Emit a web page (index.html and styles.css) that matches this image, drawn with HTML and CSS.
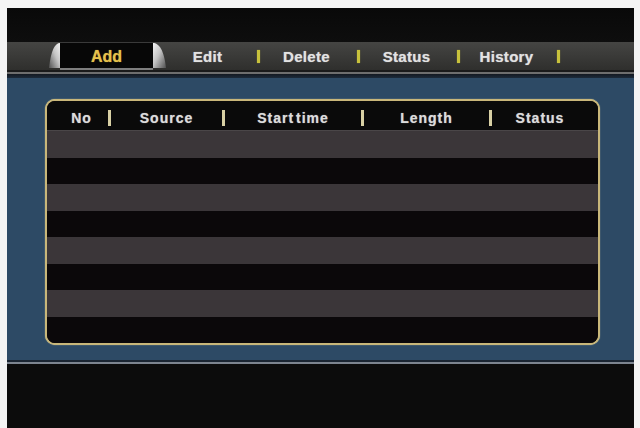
FILE: index.html
```html
<!DOCTYPE html>
<html>
<head>
<meta charset="utf-8">
<link rel="stylesheet" href="styles.css">
</head>
<body>
<div class="screen">
  <div class="top"></div>
  <div class="tabbar">
    <div class="tab-active">
      <svg class="wing" width="13" height="28" viewBox="0 0 13 28">
        <defs>
          <linearGradient id="wl" x1="1" y1="0" x2="0" y2="1">
            <stop offset="0" stop-color="#f4f4f4"/>
            <stop offset="0.45" stop-color="#c4c4c4"/>
            <stop offset="1" stop-color="#505050"/>
          </linearGradient>
        </defs>
        <path d="M13 1 C 8 1, 4 8, 2 26 L13 26 Z" fill="url(#wl)"/>
      </svg>
      <span class="pill">Add</span>
      <svg class="wing" width="15" height="28" viewBox="0 0 15 28">
        <defs>
          <linearGradient id="wr" x1="0" y1="0" x2="1" y2="1">
            <stop offset="0" stop-color="#f4f4f4"/>
            <stop offset="0.45" stop-color="#c4c4c4"/>
            <stop offset="1" stop-color="#505050"/>
          </linearGradient>
        </defs>
        <path d="M0 1 C 6 1, 11 8, 13 26 L0 26 Z" fill="url(#wr)"/>
      </svg>
    </div>
    <span class="tab tab-first">Edit</span><i class="sep"></i>
    <span class="tab">Delete</span><i class="sep"></i>
    <span class="tab">Status</span><i class="sep"></i>
    <span class="tab">History</span><i class="sep"></i>
  </div>
  <div class="rule"></div>
  <div class="panel">
    <div class="box">
      <div class="thead">
        <span class="th th-first">No</span><i class="hsep"></i>
        <span class="th">Source</span><i class="hsep"></i>
        <span class="th th-time">Start time</span><i class="hsep"></i>
        <span class="th">Length</span><i class="hsep"></i>
        <span class="th th-last">Status</span>
      </div>
      <div class="row grey"></div>
      <div class="row dark"></div>
      <div class="row grey"></div>
      <div class="row dark"></div>
      <div class="row grey"></div>
      <div class="row dark"></div>
      <div class="row grey"></div>
      <div class="row dark"></div>
    </div>
  </div>
  <div class="bottom-rule"></div>
  <div class="footer"></div>
</div>
</body>
</html>
```

FILE: styles.css
```css
html, body {
  margin: 0;
  padding: 0;
  background: #f4f4f4;
}

.screen {
  margin: 8px 0 0 7px;
  width: 627px;
  height: 420px;
  background: #0b0b0b;
  display: flex;
  flex-direction: column;
  font-family: "Liberation Sans", Arial, sans-serif;
  font-weight: bold;
  overflow: hidden;
}

.top {
  height: 34px;
  background: linear-gradient(#090909, #0e0e0e);
}

.tabbar {
  height: 28px;
  display: flex;
  align-items: center;
  padding-left: 40px;
  background: linear-gradient(#454543, #3a3a38 50%, #2f2f2d);
}

.tab-active {
  display: flex;
  align-items: stretch;
  height: 28px;
}

.wing {
  display: block;
}

.pill {
  width: 93px;
  box-sizing: border-box;
  background: #070707;
  border-top: 1px solid #3a3a3a;
  border-bottom: 2px solid #7e7e7e;
  color: #e6c24c;
  font-size: 16px;
  display: flex;
  align-items: center;
  justify-content: center;
  padding-top: 2px;
  text-shadow: 0 0 1px rgba(230, 194, 76, 0.7);
}

.tab {
  width: 97px;
  box-sizing: border-box;
  padding-right: 4px;
  text-align: center;
  color: #e2e2e2;
  font-size: 15px;
  letter-spacing: 0.3px;
  text-shadow: 0 0 1px rgba(255, 255, 255, 0.6);
}

.tab-first {
  width: 89px;
  padding-right: 10px;
}

.sep {
  display: block;
  width: 3px;
  height: 13px;
  background: #c8c23c;
  box-shadow: 0 0 1px #c8c23c;
}

.rule {
  height: 8px;
  background: linear-gradient(#1a1a1a 0, #1a1a1a 2px, #6e6e6e 2px, #6e6e6e 4px, #131820 4px, #1c2a3a 8px);
}

.panel {
  height: 282px;
  box-sizing: border-box;
  padding: 21px 0 0 38px;
  background: #2d4a65;
}

.box {
  width: 555px;
  box-sizing: border-box;
  border: 2px solid #c9b77a;
  border-radius: 10px;
  overflow: hidden;
  background: #0b090a;
  box-shadow: 0 0 1px #e8dca8;
}

.thead {
  height: 30px;
  box-sizing: border-box;
  padding-top: 4px;
  display: grid;
  grid-template-columns: 61px 3px 111px 3px 136px 3px 125px 3px 1fr;
  align-items: center;
  background: #0a0a0a;
  border-bottom: 1px solid #4a4648;
}

.th {
  text-align: center;
  color: #dcdcdc;
  font-size: 14px;
  letter-spacing: 1px;
  text-shadow: 0 0 1px rgba(255, 255, 255, 0.6);
}

.th-first {
  padding-left: 8px;
}

.th-time {
  word-spacing: -3px;
}

.th-last {
  padding-right: 10px;
}

.hsep {
  display: block;
  width: 3px;
  height: 16px;
  background: #d8d0a4;
}

.row {
  height: 26.5px;
}

.row.grey {
  background: #3b3639;
}

.row.dark {
  background: #0b080a;
}

.bottom-rule {
  height: 4px;
  background: linear-gradient(#1a2532 0, #1a2532 2px, #7d8590 2px, #7d8590 4px);
}

.footer {
  flex: 1;
  background: #0c0c0c;
}
```
